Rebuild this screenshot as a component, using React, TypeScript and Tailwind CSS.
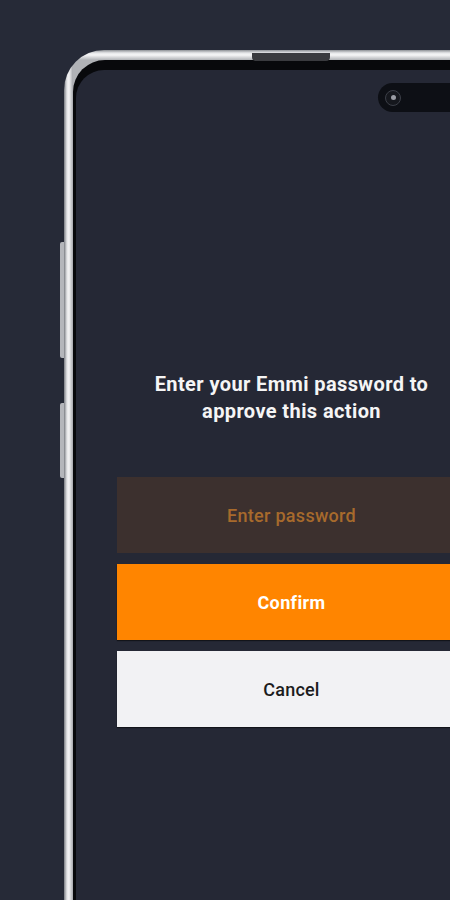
export default function App() {
  return (
    <main
      className="flex h-[900px] w-[450px] overflow-hidden bg-[#262a37] pl-[60px] pt-[50px]"
      style={{ fontFamily: "Roboto, 'Liberation Sans', sans-serif" }}
    >
      {/* SIDE BUTTONS */}
      <div className="flex w-[4px] shrink-0 flex-col">
        <div className="mt-[192px] h-[116px] rounded-l-[2px] bg-[#b4b6bb]" />
        <div className="mt-[45px] h-[75px] rounded-l-[2px] bg-[#b4b6bb]" />
      </div>

      {/* PHONE FRAME */}
      <div className="relative h-[900px] w-[480px] shrink-0 rounded-tl-[40px] bg-[linear-gradient(90deg,#7a7d83_0px,#e4e5e7_3px,#f4f4f5_5px,#a4a6ab_9px,transparent_9px),linear-gradient(180deg,#8e9196_0px,#e6e7e9_3px,#f6f6f7_5px,#b0b2b6_10px)] pl-[9px] pt-[10px]">
        {/* speaker slot */}
        <div className="absolute left-[188px] top-[3px] h-[8px] w-[78px] rounded-b-[4px] bg-[#3a3b3f]" />

        <div className="h-full rounded-tl-[32px] bg-[#08090c] pl-[3px] pt-[10px]">
          <div className="relative h-full rounded-tl-[28px] bg-[#252835]">
            {/* camera cutout */}
            <div className="absolute left-[302px] top-[13px] flex h-[29px] w-[120px] items-center rounded-full bg-[#0d0f15] pl-[7px]">
              <div className="flex h-[16px] w-[16px] items-center justify-center rounded-full border border-[#3c3f48] bg-[#15171d]">
                <div className="h-[5px] w-[5px] rounded-full bg-[#9a9ca4]" />
              </div>
            </div>

            {/* CONTENT */}
            <section className="ml-[41px] flex w-[349px] flex-col pt-[301px]">
              <h1 className="text-center text-[20px] font-bold leading-[27px] tracking-[0.4px] text-[#f5f5f5]">
                Enter your Emmi password to
                <br />
                approve this action
              </h1>

              <div className="mt-[52px] flex flex-col gap-[11px]">
                <div className="flex h-[76px] items-center justify-center bg-[#3c302e] text-[18px] font-medium tracking-[0.3px] text-[#a76a2c]">
                  Enter password
                </div>
                <button className="flex h-[76px] items-center justify-center bg-[#ff8500] text-[18px] font-bold tracking-[0.4px] text-white shadow-[0_1px_1px_rgba(0,0,0,0.5)]">
                  Confirm
                </button>
                <button className="flex h-[76px] items-center justify-center bg-[#f2f2f4] text-[18px] font-medium tracking-[0.2px] text-[#1c1c1c] shadow-[0_1px_1px_rgba(0,0,0,0.5)]">
                  Cancel
                </button>
              </div>
            </section>
          </div>
        </div>
      </div>
    </main>
  )
}
